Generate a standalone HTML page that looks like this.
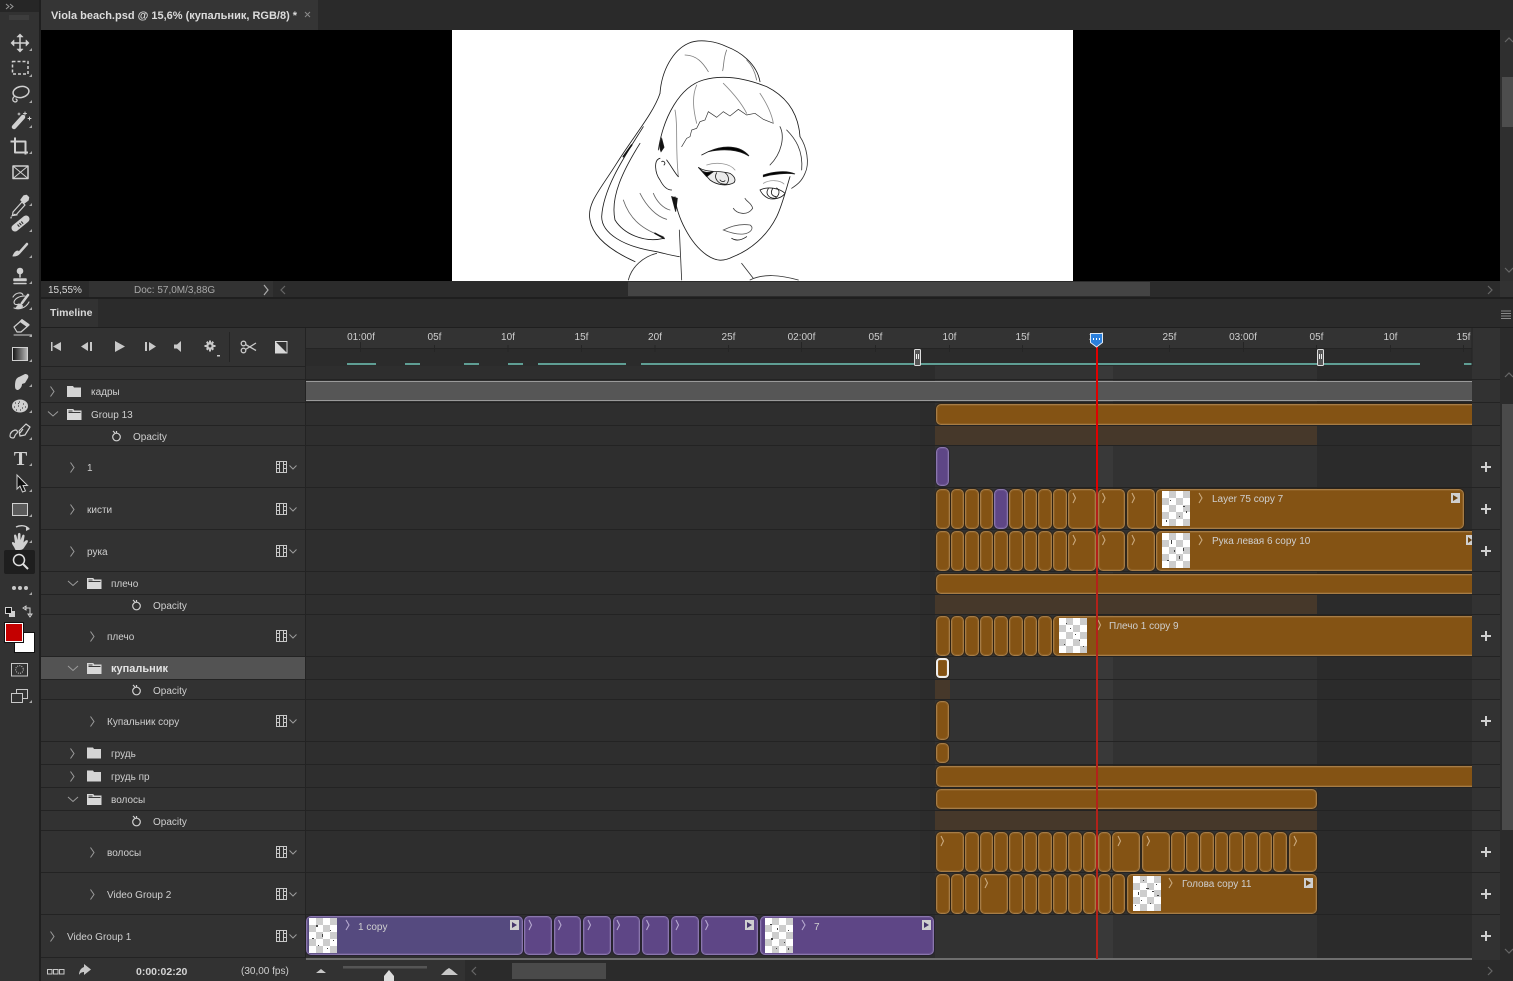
<!DOCTYPE html>
<html><head><meta charset="utf-8"><title>Timeline</title>
<style>
html,body{margin:0;padding:0;background:#2b2b2b;width:1513px;height:981px;overflow:hidden}
div{position:absolute;box-sizing:border-box}
.t{font:10px/12px "Liberation Sans","Noto Sans CJK JP",sans-serif;color:#cfcfcf;white-space:nowrap}
.b{font-weight:bold}
.m{transform:translateX(-50%)}
.o,.p{border:1px solid #a67c46;background:#845314;border-radius:5px;box-shadow:0 0 0 1px rgba(45,30,10,.55),inset 0 0 0 1px rgba(166,124,70,.3)}
.p{border-color:#8a76ad;background:#5e4686;box-shadow:0 0 0 1px rgba(35,28,50,.55),inset 0 0 0 1px rgba(138,118,173,.3)}
.y1{top:489px;height:40px}.y2{top:531px;height:40px}.y3{top:616px;height:40px}.y4{top:832px;height:40px}.y5{top:874px;height:40px}.y6{top:916px;height:39px}
.th{background:repeating-conic-gradient(#cdcdcd 0 25%,#fff 0 50%) 0 0/14px 14px;width:28px;height:35px}
.bd{background:#46382a;left:935px;width:382px;height:19px}
.l{left:41px;width:1459px;height:1px;background:#232323}
</style></head><body>

<!-- tab bar -->
<div style="left:0;top:0;width:1513px;height:30px;background:#2a2a2a"></div>
<div style="left:41px;top:0;width:277px;height:30px;background:#353535"></div>
<div class="t b" style="left:51px;top:10px;font-size:11px;color:#dcdcdc">Viola beach.psd @ 15,6% (купальник, RGB/8) *</div>

<!-- canvas -->
<div style="left:41px;top:30px;width:1459px;height:251px;background:#000"></div>
<div style="left:452px;top:30px;width:621px;height:251px;background:#fff"></div>
<svg style="position:absolute;left:560px;top:30px;filter:blur(.25px)" width="280" height="251" viewBox="0 0 840 753" fill="none" stroke="#1c1c1c" stroke-width="2.5" stroke-linecap="round">
<path d="M300 190C305 120 340 60 385 40C420 25 470 35 500 50C540 65 590 100 600 155"/>
<path d="M375 75C410 75 430 100 445 125M500 60C490 85 492 105 488 122M560 90C575 105 585 125 590 150" stroke="#777"/>
<path d="M295 360C310 260 360 170 430 150C500 130 570 150 620 170C680 200 715 250 720 320"/>
<path d="M720 320C740 350 750 400 735 430C725 455 710 465 695 475M660 290C675 320 665 370 630 405M680 300C705 325 730 360 725 420" stroke="#333"/>
<path d="M300 190C280 250 220 320 170 400C120 480 80 520 90 570C100 630 170 670 225 695"/>
<path d="M250 290C200 370 130 470 125 560C125 610 190 650 290 665C320 672 340 678 358 680"/>
<path d="M240 340C190 420 150 500 165 570C190 610 250 640 312 625"/>
<path d="M190 510C210 570 250 600 310 620M240 490C260 530 290 560 320 568M280 490C290 515 310 535 330 540" stroke="#666"/>
<path d="M305 325C298 340 298 355 303 365L312 352Z" fill="#111"/>
<path d="M335 500L347 545L352 505Z" fill="#111"/>
<path d="M190 380L215 345" stroke="#111" stroke-width="5"/>
<path d="M285 610L312 625" stroke="#111" stroke-width="5"/>
<path d="M345 500C350 560 390 640 440 675C470 695 490 695 520 680C570 660 620 620 650 560C665 530 675 490 690 440"/>
<path d="M358 600L365 750M545 700L580 745M205 750C215 710 250 680 290 670M570 750C610 730 660 735 715 750" stroke="#333"/>
<path d="M365 350L380 325 390 320 395 300 410 295 420 275 435 270 445 245 470 262 490 245 510 258 535 238 560 255 585 250 610 268 640 280" stroke="#333" stroke-width="2"/>
<path d="M410 165C395 200 400 240 410 280M490 160C520 190 545 220 560 250M600 190C620 220 635 250 640 280M345 240C355 290 345 340 355 440" stroke="#888"/>
<path d="M300 385C280 390 285 430 300 450C315 480 330 480 335 480M305 395C312 390 318 400 312 405M320 390C335 410 345 430 355 440"/>
<path d="M445 365C490 345 540 345 567 378C535 358 490 355 445 365Z" fill="#000"/>
<path d="M425 375L445 365M610 435C640 425 680 420 705 432C680 428 640 432 610 440Z" fill="#000"/>
<path d="M415 412C440 430 480 420 510 430C525 440 528 450 522 458C500 470 470 465 450 450C440 440 430 425 415 412Z" fill="#000" fill-opacity=".08"/>
<path d="M415 412C432 432 445 428 460 425L440 440Z" fill="#000"/>
<path d="M470 428C460 445 475 465 500 462C510 450 505 435 495 428M480 450C485 456 492 456 495 452" stroke-width="2.5"/>
<path d="M440 405C470 395 510 400 525 420" stroke="#999"/>
<path d="M600 480C625 468 660 475 675 490C665 505 640 510 625 505C610 497 605 490 600 480Z"/>
<path d="M625 476C615 490 625 505 645 505C660 495 660 480 650 474M638 476C630 488 635 498 648 500" stroke-width="2.5"/>
<path d="M610 460C630 448 660 450 672 462" stroke="#999"/>
<path d="M520 535C530 550 560 560 578 535M555 505C560 515 575 520 578 535" stroke="#444"/>
<path d="M490 600C510 590 540 580 570 585C585 595 570 610 550 612C530 614 510 608 490 600Z" stroke="#555"/>
<path d="M515 625C530 635 545 630 560 620"/>
</svg>

<!-- right canvas scrollbar -->
<div style="left:1500px;top:30px;width:13px;height:251px;background:#2f2f2f"></div>
<div style="left:1502px;top:77px;width:11px;height:50px;background:#4d4d4d"></div>

<!-- status bar -->
<div style="left:41px;top:281px;width:1472px;height:16px;background:#2b2b2b"></div>
<div style="left:89px;top:281px;width:184px;height:16px;background:#323232"></div>
<div style="left:1500px;top:281px;width:13px;height:16px;background:#323232"></div>
<div style="left:628px;top:282px;width:522px;height:14px;background:#444"></div>
<div class="t" style="left:48px;top:285px;color:#d8d8d8">15,55%</div>
<div class="t" style="left:134px;top:285px;color:#a8a8a8">Doc: 57,0M/3,88G</div>

<!-- panel header -->
<div style="left:41px;top:297px;width:1472px;height:2px;background:#1f1f1f"></div>
<div style="left:41px;top:299px;width:1472px;height:29px;background:#2b2b2b"></div>
<div style="left:41px;top:299px;width:57px;height:29px;background:#323232"></div>
<div class="t b" style="left:50px;top:307px;font-size:10.5px;color:#d8d8d8">Timeline</div>
<div style="left:41px;top:327px;width:1472px;height:1px;background:#1f1f1f"></div>

<!-- left panel -->
<div style="left:41px;top:328px;width:265px;height:632px;background:#323232"></div>
<div style="left:41px;top:657px;width:264px;height:22px;background:#535353"></div>

<!-- ruler -->
<div style="left:306px;top:328px;width:1166px;height:20px;background:#333"></div>
<div style="left:306px;top:348px;width:1166px;height:18px;background:#2b2b2b"></div>
<div style="left:306px;top:348px;width:1166px;height:1px;background:#242424"></div>

<!-- track background -->
<div style="left:306px;top:366px;width:1166px;height:592px;background:#2e2e2e"></div>
<div style="left:920px;top:366px;width:15px;height:592px;background:#2c2c2c"></div>
<div style="left:935px;top:366px;width:382px;height:592px;background:#323232"></div>
<div style="left:1097px;top:366px;width:16px;height:592px;background:#393939"></div>
<div style="left:1317px;top:366px;width:155px;height:592px;background:#2b2b2b"></div>

<!-- ruler labels -->
<div class="t m" style="left:361px;top:332px">01:00f</div>
<div class="t m" style="left:434.5px;top:332px">05f</div>
<div class="t m" style="left:508px;top:332px">10f</div>
<div class="t m" style="left:581.5px;top:332px">15f</div>
<div class="t m" style="left:655px;top:332px">20f</div>
<div class="t m" style="left:728.5px;top:332px">25f</div>
<div class="t m" style="left:801.5px;top:332px">02:00f</div>
<div class="t m" style="left:875.5px;top:332px">05f</div>
<div class="t m" style="left:949.5px;top:332px">10f</div>
<div class="t m" style="left:1022.5px;top:332px">15f</div>
<div class="t m" style="left:1096px;top:332px">20f</div>
<div class="t m" style="left:1169.5px;top:332px">25f</div>
<div class="t m" style="left:1243px;top:332px">03:00f</div>
<div class="t m" style="left:1316.5px;top:332px">05f</div>
<div class="t m" style="left:1390.5px;top:332px">10f</div>
<div class="t m" style="left:1463.5px;top:332px">15f</div>

<!-- teal work bars -->
<div style="left:347px;top:363px;width:29px;height:2px;background:#5f9e94"></div>
<div style="left:405px;top:363px;width:15px;height:2px;background:#5f9e94"></div>
<div style="left:464px;top:363px;width:15px;height:2px;background:#5f9e94"></div>
<div style="left:508px;top:363px;width:15px;height:2px;background:#5f9e94"></div>
<div style="left:538px;top:363px;width:88px;height:2px;background:#5f9e94"></div>
<div style="left:641px;top:363px;width:779px;height:2px;background:#5f9e94"></div>
<div style="left:1464px;top:363px;width:8px;height:2px;background:#5f9e94"></div>

<!-- full bars -->
<div style="left:306px;top:381px;width:1166px;height:20px;background:#565656;border-top:1px solid #9a9a9a;border-bottom:1px solid #9a9a9a"></div>
<div class="o" style="left:936px;top:404px;width:560px;height:21px"></div>
<div class="bd" style="top:426px"></div>
<div class="p" style="left:936px;top:447px;width:13px;height:39px"></div>

<!-- кисти -->
<div class="o y1" style="left:936px;width:14px"></div>
<div class="o y1" style="left:951px;width:13px"></div>
<div class="o y1" style="left:965px;width:14px"></div>
<div class="o y1" style="left:980px;width:13px"></div>
<div class="p y1" style="left:994px;width:14px"></div>
<div class="o y1" style="left:1009px;width:14px"></div>
<div class="o y1" style="left:1024px;width:13px"></div>
<div class="o y1" style="left:1038px;width:14px"></div>
<div class="o y1" style="left:1053px;width:14px"></div>
<div class="o y1" style="left:1068px;width:28px"></div>
<div class="o y1" style="left:1098px;width:27px"></div>
<div class="o y1" style="left:1127px;width:28px"></div>
<div class="o y1" style="left:1156px;width:308px"></div>
<div class="th" style="left:1162px;top:491px"></div>
<div class="t" style="left:1212px;top:494px">Layer 75 copy 7</div>

<!-- рука -->
<div class="o y2" style="left:936px;width:14px"></div>
<div class="o y2" style="left:951px;width:13px"></div>
<div class="o y2" style="left:965px;width:14px"></div>
<div class="o y2" style="left:980px;width:13px"></div>
<div class="o y2" style="left:994px;width:14px"></div>
<div class="o y2" style="left:1009px;width:14px"></div>
<div class="o y2" style="left:1024px;width:13px"></div>
<div class="o y2" style="left:1038px;width:14px"></div>
<div class="o y2" style="left:1053px;width:14px"></div>
<div class="o y2" style="left:1068px;width:28px"></div>
<div class="o y2" style="left:1098px;width:27px"></div>
<div class="o y2" style="left:1127px;width:28px"></div>
<div class="o y2" style="left:1156px;width:340px"></div>
<div class="th" style="left:1162px;top:533px"></div>
<div class="t" style="left:1212px;top:536px">Рука левая 6 copy 10</div>

<!-- плечо -->
<div class="o" style="left:936px;top:574px;width:560px;height:20px"></div>
<div class="bd" style="top:595px"></div>
<div class="o y3" style="left:936px;width:14px"></div>
<div class="o y3" style="left:951px;width:13px"></div>
<div class="o y3" style="left:965px;width:14px"></div>
<div class="o y3" style="left:980px;width:13px"></div>
<div class="o y3" style="left:994px;width:14px"></div>
<div class="o y3" style="left:1009px;width:14px"></div>
<div class="o y3" style="left:1024px;width:13px"></div>
<div class="o y3" style="left:1038px;width:14px"></div>
<div class="o y3" style="left:1053px;width:440px"></div>
<div class="th" style="left:1059px;top:618px"></div>
<div class="t" style="left:1109px;top:621px">Плечо 1 copy 9</div>

<!-- купальник -->
<div class="o" style="left:936px;top:658px;width:13px;height:20px;border:2px solid #eee;border-radius:4px"></div>
<div style="left:935px;top:680px;width:15px;height:19px;background:#46382a"></div>
<div class="o" style="left:936px;top:701px;width:13px;height:39px"></div>
<div class="o" style="left:936px;top:743px;width:13px;height:20px"></div>
<div class="o" style="left:936px;top:766px;width:560px;height:21px"></div>
<div class="o" style="left:936px;top:789px;width:381px;height:20px"></div>
<div class="bd" style="top:811px"></div>

<!-- волосы -->
<div class="o y4" style="left:936px;width:28px"></div>
<div class="o y4" style="left:965px;width:14px"></div>
<div class="o y4" style="left:980px;width:13px"></div>
<div class="o y4" style="left:994px;width:14px"></div>
<div class="o y4" style="left:1009px;width:14px"></div>
<div class="o y4" style="left:1024px;width:13px"></div>
<div class="o y4" style="left:1038px;width:14px"></div>
<div class="o y4" style="left:1053px;width:14px"></div>
<div class="o y4" style="left:1068px;width:14px"></div>
<div class="o y4" style="left:1083px;width:13px"></div>
<div class="o y4" style="left:1098px;width:13px"></div>
<div class="o y4" style="left:1112px;width:28px"></div>
<div class="o y4" style="left:1142px;width:28px"></div>
<div class="o y4" style="left:1171px;width:14px"></div>
<div class="o y4" style="left:1186px;width:13px"></div>
<div class="o y4" style="left:1200px;width:14px"></div>
<div class="o y4" style="left:1215px;width:13px"></div>
<div class="o y4" style="left:1229px;width:14px"></div>
<div class="o y4" style="left:1244px;width:14px"></div>
<div class="o y4" style="left:1259px;width:13px"></div>
<div class="o y4" style="left:1273px;width:14px"></div>
<div class="o y4" style="left:1289px;width:28px"></div>

<!-- Video Group 2 -->
<div class="o y5" style="left:936px;width:14px"></div>
<div class="o y5" style="left:951px;width:13px"></div>
<div class="o y5" style="left:965px;width:14px"></div>
<div class="o y5" style="left:980px;width:28px"></div>
<div class="o y5" style="left:1009px;width:14px"></div>
<div class="o y5" style="left:1024px;width:13px"></div>
<div class="o y5" style="left:1038px;width:14px"></div>
<div class="o y5" style="left:1053px;width:14px"></div>
<div class="o y5" style="left:1068px;width:14px"></div>
<div class="o y5" style="left:1083px;width:13px"></div>
<div class="o y5" style="left:1098px;width:13px"></div>
<div class="o y5" style="left:1112px;width:13px"></div>
<div class="o y5" style="left:1127px;width:190px"></div>
<div class="th" style="left:1133px;top:876px"></div>
<div class="t" style="left:1182px;top:879px">Голова copy 11</div>

<!-- Video Group 1 -->
<div class="p y6" style="left:306px;width:217px;background:#554a7f"></div>
<div class="p y6" style="left:524px;width:28px"></div>
<div class="p y6" style="left:554px;width:27px"></div>
<div class="p y6" style="left:583px;width:28px"></div>
<div class="p y6" style="left:613px;width:27px"></div>
<div class="p y6" style="left:642px;width:27px"></div>
<div class="p y6" style="left:671px;width:28px"></div>
<div class="p y6" style="left:701px;width:57px"></div>
<div class="p y6" style="left:760px;width:174px"></div>
<div class="th" style="left:309px;top:918px"></div>
<div class="th" style="left:765px;top:918px"></div>
<div class="t" style="left:358px;top:922px">1 copy</div>
<div class="t" style="left:814px;top:922px">7</div>

<!-- bottom line + right col -->
<div style="left:306px;top:958px;width:1166px;height:2px;background:#6e6e6e"></div>
<div style="left:1472px;top:328px;width:28px;height:632px;background:#323232"></div>
<div style="left:1500px;top:328px;width:13px;height:632px;background:#2b2b2b"></div>
<div style="left:1502px;top:404px;width:11px;height:426px;background:#4a4a4a"></div>

<!-- row separators -->
<div class="l" style="top:379px"></div><div class="l" style="top:402px"></div><div class="l" style="top:425px"></div><div class="l" style="top:445px"></div><div class="l" style="top:487px"></div><div class="l" style="top:529px"></div><div class="l" style="top:571px"></div><div class="l" style="top:594px"></div><div class="l" style="top:614px"></div><div class="l" style="top:656px"></div><div class="l" style="top:679px"></div><div class="l" style="top:699px"></div><div class="l" style="top:741px"></div><div class="l" style="top:764px"></div><div class="l" style="top:787px"></div><div class="l" style="top:810px"></div><div class="l" style="top:830px"></div><div class="l" style="top:872px"></div><div class="l" style="top:914px"></div>
<div style="left:41px;top:957px;width:264px;height:1px;background:#232323"></div>
<div style="left:41px;top:366px;width:264px;height:1px;background:#232323"></div>
<div style="left:305px;top:328px;width:1px;height:630px;background:#232323"></div>

<!-- bottom bar -->
<div style="left:41px;top:960px;width:1472px;height:21px;background:#2b2b2b"></div>
<div style="left:41px;top:960px;width:424px;height:21px;background:#323232"></div>
<div style="left:512px;top:963px;width:94px;height:16px;background:#4a4a4a"></div>
<div class="t b" style="left:136px;top:966px;color:#d4d4d4;font-size:10.5px">0:00:02:20</div>
<div class="t" style="left:241px;top:966px">(30,00 fps)</div>

<!-- layer labels -->
<div class="t" style="left:91px;top:387px">кадры</div>
<div class="t" style="left:91px;top:410px">Group 13</div>
<div class="t" style="left:133px;top:432px">Opacity</div>
<div class="t" style="left:87px;top:463px">1</div>
<div class="t" style="left:87px;top:505px">кисти</div>
<div class="t" style="left:87px;top:547px">рука</div>
<div class="t" style="left:111px;top:579px">плечо</div>
<div class="t" style="left:153px;top:601px">Opacity</div>
<div class="t" style="left:107px;top:632px">плечо</div>
<div class="t b" style="left:111px;top:663px;color:#e4e4e4;font-size:11px">купальник</div>
<div class="t" style="left:153px;top:686px">Opacity</div>
<div class="t" style="left:107px;top:717px">Купальник copy</div>
<div class="t" style="left:111px;top:749px">грудь</div>
<div class="t" style="left:111px;top:772px">грудь пр</div>
<div class="t" style="left:111px;top:795px">волосы</div>
<div class="t" style="left:153px;top:817px">Opacity</div>
<div class="t" style="left:107px;top:848px">волосы</div>
<div class="t" style="left:107px;top:890px">Video Group 2</div>
<div class="t" style="left:67px;top:932px">Video Group 1</div>

<!-- toolbar -->
<div style="left:0;top:0;width:41px;height:981px;background:#323232;border-right:2px solid #1f1f1f"></div>
<div style="left:0;top:0;width:39px;height:12px;background:#262626"></div>
<div style="left:4px;top:550px;width:31px;height:24px;background:#1e1e1e;border-radius:2px"></div>
<div style="left:15px;top:633px;width:19px;height:19px;background:#fff;outline:1px solid #111"></div>
<div style="left:5px;top:623px;width:18px;height:19px;background:#c40000;border:1px solid #fff;outline:1px solid #111"></div>

<!-- icons overlay -->
<svg style="position:absolute;left:0;top:0" width="1513" height="981" viewBox="0 0 1513 981" fill="none">
<path d="M305 12l5 5m0-5l-5 5" stroke="#8a8a8a"/>
<g stroke="#666" stroke-width="1.2">
<path d="M1505 42l4-4 4 4M1505 268l4 4 4-4M1488 286l4 4-4 4M285 286l-4 4 4 4"/>
<path d="M264 285l4 5-4 5" stroke="#aaa"/>
<path d="M1505 377l4-4 4 4M1505 949l4 4 4-4M476 967l-4 4 4 4M1488 967l4 4-4 4"/>
</g>
<path d="M1501 311h10M1501 313.500h10M1501 316h10M1501 318.500h10" stroke="#8a8a8a"/>
<path d="M6 4l3 2.500-3 2.500M10 4l3 2.500-3 2.500" stroke="#999"/>
<path d="M10 15v5M12 15v5M14 15v5M16 15v5M18 15v5M20 15v5M22 15v5M24 15v5M26 15v5M28 15v5" stroke="#484848"/>

<g fill="#a8a8a8">
<path d="M32 48v3h-3zM32 74v3h-3zM32 100v3h-3zM32 125v3h-3zM32 151v3h-3zM32 203v3h-3zM32 229v3h-3zM32 255v3h-3zM32 281v3h-3zM32 307v3h-3zM32 334v3h-3zM32 359v3h-3zM32 384v3h-3zM32 410v3h-3zM32 437v3h-3zM32 463v3h-3zM32 489v3h-3zM32 514v3h-3zM32 540v3h-3zM32 592v3h-3zM32 700v3h-3z"/>
</g>
<g stroke="#d0d0d0" stroke-width="1.5" stroke-linecap="round" stroke-linejoin="round">
<path d="M20 36v14M13 43h14"/>
<path d="M20 34l-3 3h6zM20 52l-3-3h6zM11 43l3-3v6zM29 43l-3-3v6z" fill="#d0d0d0" stroke-width=".6"/>
<rect x="12.500" y="61.500" width="15.500" height="12.500" stroke-dasharray="3 2" stroke-linecap="butt"/>
<ellipse cx="21" cy="92" rx="8" ry="5.500" transform="rotate(-12 21 92)"/>
<path d="M15 96c-3 2-3 5 0 6M16 99c2 1 1 3-1 3" stroke-width="1.200"/>
<path d="M14 127l9-10" stroke-width="4.500"/>
<path d="M25 112v3M23.500 113.500h3M29.500 117v3M28 118.500h3M19 113v2M18 114h2" stroke-width="1"/>
<path d="M10.500 141.500h15v13M15 137.500v15h13" stroke-width="2" stroke-linecap="butt"/>
<rect x="13" y="166" width="15" height="12.500"/>
<path d="M13 166l15 12.500M28 166l-15 12.500" stroke-width="1"/>
<path d="M13 212l9-10 3 3-9 10-3.500.5z" stroke-width="1.200"/>
<path d="M21 200l3-4 2.500-.5 2 2-.5 2.500-4 3z" fill="#d0d0d0"/>
<path d="M15 228l11-9" stroke-width="7"/>
<path d="M18 226l5-4" stroke="#333" stroke-width="3" stroke-dasharray="1.200 1.200" stroke-linecap="butt"/>
<path d="M11 218a4 4 0 0 1 6-3" stroke-dasharray="1 1.500" stroke-width="1.200"/>
<path d="M27 244l-8 9" stroke-width="2.500"/>
<path d="M18 251c-3 0-4 3-5 5 3 0 6-1 6.500-3z" fill="#d0d0d0" stroke-width="1"/>
<circle cx="20" cy="271" r="3.300" fill="#d0d0d0" stroke="none"/>
<path d="M20 273v4M14 279h12v1.500h-12zM14 283.500h12" stroke-width="1.500" fill="#d0d0d0"/>
<path d="M13 297c3-5 9-5 10-2M25 296c-5 0-10 2-11 6 0 3 3 3 5 2M14 308c5 2 12 0 15-6" stroke-width="1.100"/>
<path d="M28 295l-6 8" stroke-width="2.500"/>
<path d="M21 304c-3 0-4 3-5 4 3 1 6 0 6.500-2z" fill="#d0d0d0" stroke-width="1"/>
<path d="M14 327l8-7 7 5-8 7h-4z" stroke-width="1.200"/>
<path d="M20 321.500l7 5 2-2-7-5z" fill="#d0d0d0" stroke-width="1"/>
<path d="M14 335h17" stroke-width="1"/>
</g>
<defs><linearGradient id="gr"><stop offset="0" stop-color="#111"/><stop offset="1" stop-color="#bbb"/></linearGradient></defs>
<rect x="12.500" y="347.500" width="15" height="13" fill="url(#gr)" stroke="#d0d0d0"/>
<path d="M15 386c0-5 1-8 4-9l6-3c3 0 4 2 3 4l-3 5-3 1c0 3-2 5-4 6-2 0-3-1-3-4z" fill="#d0d0d0"/>
<ellipse cx="20" cy="406" rx="8" ry="6.500" fill="#cfcfcf"/>
<path d="M15 403h1M19 402h1M23 404h1M14 407h1M18 406h1M22 408h1M25 407h1M16 410h1M20 410h1M18 403.500h1" stroke="#444" stroke-width="1.200"/>
<path d="M19 431l7-7 4 3-5 8-5 1zM23 429l-3 4M10 436c0-3 2-5 5-6 3 0 3 3 1 4-2 2-1 4-3 4s-3-1-3-2z" stroke="#d0d0d0" stroke-width="1.200" stroke-linejoin="round"/>
<text x="20.500" y="465" text-anchor="middle" font-family="Liberation Serif" font-weight="bold" font-size="20" fill="#d0d0d0">T</text>
<path d="M17 475l0 14 3-3 2.500 6 3-1-2.500-5.500h4.500z" fill="#111" stroke="#d0d0d0"/>
<rect x="12.500" y="503.500" width="15" height="12" fill="#5a5a5a" stroke="#d0d0d0"/>
<path d="M14 547c-2-3-3-5-1-5l2 1-1-7c0-2 2-2 2.500 0l1 4 .5-6c.5-1.500 2-1.500 2.500 0v6l2-5c1-1 2.500 0 2 1.500l-1 6 2-2c2-1 3 0 2 2l-4 6c-1 1-2 1.500-4 1.500h-4z" fill="#d0d0d0"/>
<path d="M16 527c4-2 10-2 13 2" stroke="#d0d0d0" stroke-width="1.300"/>
<path d="M26 526l4 3-4 2z" fill="#d0d0d0"/>
<circle cx="19" cy="560" r="5.500" stroke="#e0e0e0" stroke-width="1.500"/>
<path d="M23 564l5 5" stroke="#e0e0e0" stroke-width="2"/>
<circle cx="14" cy="588" r="2" fill="#c8c8c8"/><circle cx="20" cy="588" r="2" fill="#c8c8c8"/><circle cx="26" cy="588" r="2" fill="#c8c8c8"/>
<rect x="9" y="611" width="6" height="6" fill="#d0d0d0"/>
<rect x="5.500" y="607.500" width="6" height="6" fill="#111" stroke="#d0d0d0"/>
<path d="M23 608l3-2v4zM25 608h5v7M30 617l-2-3h4zM30 617v-1" fill="none" stroke="#d0d0d0"/>
<rect x="11.500" y="663.500" width="16" height="12.500" stroke="#c8c8c8"/>
<circle cx="19.500" cy="669.500" r="3.800" stroke="#c8c8c8" stroke-dasharray="1 1.200"/>
<rect x="16.500" y="689.500" width="11" height="9" stroke="#c8c8c8"/>
<rect x="11.500" y="693.500" width="11" height="9" fill="#323232" stroke="#c8c8c8"/>

<!-- transport -->
<g fill="#c8c8c8">
<path d="M51 342h1.500v9H51zM61 342v9l-8-4.500z"/>
<path d="M81 346.500l7-4.500v9zM90 342h2v9h-2z"/>
<path d="M115 341l10 5.500-10 5.500z"/>
<path d="M145 342h2v9h-2zM149 342v9l7-4.500z"/>
<path d="M174 344.500h3l4-3.500v11l-4-3.500h-3z"/>
<circle cx="210" cy="346" r="3.800"/>
<path d="M209 340.500h2v11h-2zM204.500 345h11v2h-11zM206 342.500l1.500-1.500 6.500 8-1.500 1.500zM214 342.500l-1.500-1.500-6.500 8 1.500 1.500z"/>
<path d="M217 355h3v1.500h-3z"/>
</g>
<circle cx="210" cy="346" r="1.500" fill="#323232"/>
<path d="M229.500 332v30" stroke="#242424"/>
<g stroke="#c8c8c8" stroke-width="1.300"><circle cx="243.500" cy="343.500" r="2.300"/><circle cx="243.500" cy="350.500" r="2.300"/><path d="M245.500 344.500l10.500 6M245.500 349.500l10.500-6.500"/></g>
<rect x="275.500" y="341.500" width="11.500" height="11.500" stroke="#d8d8d8" stroke-width="1"/>
<path d="M275 353.500v-12.500l12.500 12.500z" fill="#d8d8d8"/>

<!-- ticks -->
<path d="M360.500 342v10M434.500 345v7M508 345v7M581.500 345v7M655 345v7M728.500 345v7M801.500 342v10M875.500 345v7M949.500 345v7M1022.500 345v7M1169.500 345v7M1243.500 342v10M1316.500 345v7M1390.500 345v7M1463.500 345v7" stroke="#252525"/>

<!-- work handles -->
<g><rect x="914.500" y="349.500" width="6" height="16" rx="1" fill="#555" stroke="#ddd"/><path d="M916.500 354v5M918.500 354v5" stroke="#eee"/>
<rect x="1317.500" y="349.500" width="6" height="16" rx="1" fill="#555" stroke="#ddd"/><path d="M1319.500 354v5M1321.500 354v5" stroke="#eee"/></g>

<!-- chevrons left panel -->
<g stroke="#9c9c9c" stroke-width="1">
<path d="M50.500 386.500l3.500 5-3.500 5M48 411.500l5 4.500 5-4.500M70.500 462.500l3.500 5-3.500 5M70.500 504.500l3.500 5-3.500 5M70.500 546.500l3.500 5-3.500 5M68 581l5 4.500 5-4.500M90.500 631.500l3.500 5-3.500 5M68 666l5 4.500 5-4.500M90.500 716.500l3.500 5-3.500 5M70.500 748.500l3.500 5-3.500 5M70.500 771.500l3.500 5-3.500 5M68 797l5 4.500 5-4.500M90.500 847.500l3.500 5-3.500 5M90.500 889.500l3.500 5-3.500 5M50.500 931.500l3.500 5-3.500 5"/>
<path d="M289.500 465.500l3.500 3.500 3.500-3.500M289.500 507.500l3.500 3.500 3.500-3.500M289.500 549.500l3.500 3.500 3.500-3.500M289.500 634.500l3.500 3.500 3.500-3.500M289.500 719.500l3.500 3.500 3.500-3.500M289.500 850.500l3.500 3.500 3.500-3.500M289.500 892.500l3.500 3.500 3.500-3.500M289.500 934.500l3.500 3.500 3.500-3.500"/>
</g>
<!-- folders -->
<g fill="#d4d4d4">
<path d="M67 386h6l1 1.500h7v9.500H67z"/>
<path d="M87 747.500h6l1 1.500h7v9.500H87zM87 770.500h6l1 1.500h7v9.500H87z"/>
</g>
<g fill="#d8d8d8" stroke="#d8d8d8">
<path d="M67.500 409.500h5.500l1 1.500h7v2H67.500zM67.500 414h13.500v5.500H67.500z"/>
<path d="M87.500 578.500h5.500l1 1.500h7v2H87.500zM87.500 583h13.500v5.500H87.500z"/>
<path d="M87.500 663.500h5.500l1 1.500h7v2H87.500zM87.500 668h13.500v5.500H87.500z"/>
<path d="M87.500 794.500h5.500l1 1.500h7v2H87.500zM87.500 799h13.500v5.500H87.500z"/>
</g>
<path d="M68.500 411h4M68.500 412.500h12M88.500 580h4M88.500 581.500h12M88.500 665h4M88.500 666.500h12M88.500 796h4M88.500 797.500h12" stroke="#3a3a3a"/>
<!-- stopwatches -->
<g stroke="#d0d0d0" stroke-width="1.200">
<circle cx="116.500" cy="437" r="3.800"/><path d="M113 431l2 2M116.500 431v2"/>
<circle cx="136.500" cy="606" r="3.800"/><path d="M133 600l2 2M136.500 600v2"/>
<circle cx="136.500" cy="691" r="3.800"/><path d="M133 685l2 2M136.500 685v2"/>
<circle cx="136.500" cy="822" r="3.800"/><path d="M133 816l2 2M136.500 816v2"/>
</g>
<!-- film icons -->
<g stroke="#c8c8c8" fill="none">
<path d="M276.500 461.500h10v11h-10zM279.500 461.500v11M283.500 461.500v11M276.500 464.500h3M276.500 468.500h3M283.500 464.500h3M283.500 468.500h3"/>
<path d="M276.500 503.500h10v11h-10zM279.500 503.500v11M283.500 503.500v11M276.500 506.500h3M276.500 510.500h3M283.500 506.500h3M283.500 510.500h3"/>
<path d="M276.500 545.500h10v11h-10zM279.500 545.500v11M283.500 545.500v11M276.500 548.500h3M276.500 552.500h3M283.500 548.500h3M283.500 552.500h3"/>
<path d="M276.500 630.500h10v11h-10zM279.500 630.500v11M283.500 630.500v11M276.500 633.500h3M276.500 637.500h3M283.500 633.500h3M283.500 637.500h3"/>
<path d="M276.500 715.500h10v11h-10zM279.500 715.500v11M283.500 715.500v11M276.500 718.500h3M276.500 722.500h3M283.500 718.500h3M283.500 722.500h3"/>
<path d="M276.500 846.500h10v11h-10zM279.500 846.500v11M283.500 846.500v11M276.500 849.500h3M276.500 853.500h3M283.500 849.500h3M283.500 853.500h3"/>
<path d="M276.500 888.500h10v11h-10zM279.500 888.500v11M283.500 888.500v11M276.500 891.500h3M276.500 895.500h3M283.500 891.500h3M283.500 895.500h3"/>
<path d="M276.500 930.500h10v11h-10zM279.500 930.500v11M283.500 930.500v11M276.500 933.500h3M276.500 937.500h3M283.500 933.500h3M283.500 937.500h3"/>
</g>
<!-- plus -->
<path d="M1481 467h10M1486 462v10M1481 509h10M1486 504v10M1481 551h10M1486 546v10M1481 636h10M1486 631v10M1481 721h10M1486 716v10M1481 852h10M1486 847v10M1481 894h10M1486 889v10M1481 936h10M1486 931v10" stroke="#d0d0d0" stroke-width="2"/>
<!-- clip chevrons -->
<g stroke="#c9a97e" stroke-width="1.100">
<path d="M1073 493l2.500 5-2.500 5M1102.500 493l2.500 5-2.500 5M1132 493l2.500 5-2.500 5M1199 493l3 5-3 5M1073 535l2.500 5-2.500 5M1102.500 535l2.500 5-2.500 5M1132 535l2.500 5-2.500 5M1199 535l3 5-3 5M1098 620l2.500 5-2.500 5M941 836l2.500 5-2.500 5M1118 836l2.500 5-2.500 5M1147 836l2.500 5-2.500 5M1294 836l2.500 5-2.500 5M985 878l2.500 5-2.500 5M1169 878l3 5-3 5"/>
</g>
<g stroke="#b5a8cf" stroke-width="1.100">
<path d="M346 920l3 5-3 5M529 920l2.500 5-2.500 5M558.500 920l2.500 5-2.500 5M588 920l2.500 5-2.500 5M617 920l2.500 5-2.500 5M646.500 920l2.500 5-2.500 5M676 920l2.500 5-2.500 5M705.500 920l2.500 5-2.500 5M802 920l3 5-3 5"/>
</g>
<!-- play badges -->
<path d="M1451 493h9v10h-9zM1466 535h6v10h-6zM1304 878h9v10h-9z" fill="#cfcfcf"/>
<path d="M1453 495v6l5-3zM1468 537v6l4-3zM1306 880v6l5-3z" fill="#6b4310"/>
<path d="M510 920h9v10h-9zM745 920h9v10h-9zM922 920h9v10h-9z" fill="#cfcfcf"/>
<path d="M512 922v6l5-3zM747 922v6l5-3zM924 922v6l5-3z" fill="#45356b"/>
<!-- thumb noise -->
<g fill="#444">
<path d="M1166 520h1v2h-1zM1183 506h2v1h-2zM1186 511h1v2h-1zM1170 500h1v1h-1zM1179 516h1v1h-1zM1171 540h1v4h-1zM1183 548h1v3h-1zM1179 556h1v3h-1zM1167 560h2v1h-2zM1174 550h1v2h-1z"/>
<path d="M1066 623h1v1h-1zM1070 628h1v1h-1zM1075 634h1v1h-1zM1079 640h1v1h-1zM1083 646h1v1h-1zM1064 644h1v1h-1z"/>
<path d="M1143 880h1v1h-1zM1146 888h3v1h-3zM1152 891h2v1h-2zM1138 892h1v3h-1zM1156 884h1v1h-1zM1141 900h1v1h-1zM1150 903h1v1h-1zM1157 895h2v1h-2zM1135 905h1v1h-1z"/>
<path d="M316 925h2v2h-2zM312 938h2v1h-2zM322 934h1v3h-1zM330 930h1v1h-1zM318 945h1v1h-1zM327 948h1v1h-1zM333 940h1v1h-1z"/>
<path d="M770 924h2v1h-2zM777 928h1v2h-1zM771 938h2v2h-2zM784 942h1v1h-1zM776 948h1v1h-1zM788 930h1v1h-1zM788 948h1v2h-1z"/>
</g>
<!-- bottom bar icons -->
<path d="M47.500 969.500h4.500v4.500h-4.500zM53.500 969.500h4.500v4.500h-4.500zM59.500 969.500h4.500v4.500h-4.500z" stroke="#c8c8c8"/>
<path d="M84 967v-3l7 5.500-7 5.500v-3c-2 0-4 1-5 3 0-4 2-7 5-8z" fill="#c8c8c8"/>
<path d="M316 973l5-4 5 4z" fill="#c8c8c8"/>
<path d="M343 966h84v2.500h-84z" fill="#555"/>
<path d="M389 970l5 6v5h-10v-5z" fill="#dcdcdc"/>
<path d="M441 975l5-5 3-2 3 2 6 5z" fill="#c8c8c8"/>
<path d="M1472 328v38" stroke="#242424"/>
</svg>

<!-- playhead -->
<div style="left:1096px;top:345px;width:2px;height:145px;background:#e00000"></div>
<div style="left:1096px;top:490px;width:2px;height:469px;background:#b3211a"></div>
<svg style="position:absolute;left:1089px;top:332px" width="15" height="16" viewBox="0 0 15 16">
<path d="M1.500 1.500h12v9l-6 4.500-6-4.500z" fill="#2a7fdc" stroke="#dfe8f2"/>
<path d="M4.500 6v2M7.500 6v2M10.500 6v2" stroke="#fff"/>
</svg>
</body></html>
